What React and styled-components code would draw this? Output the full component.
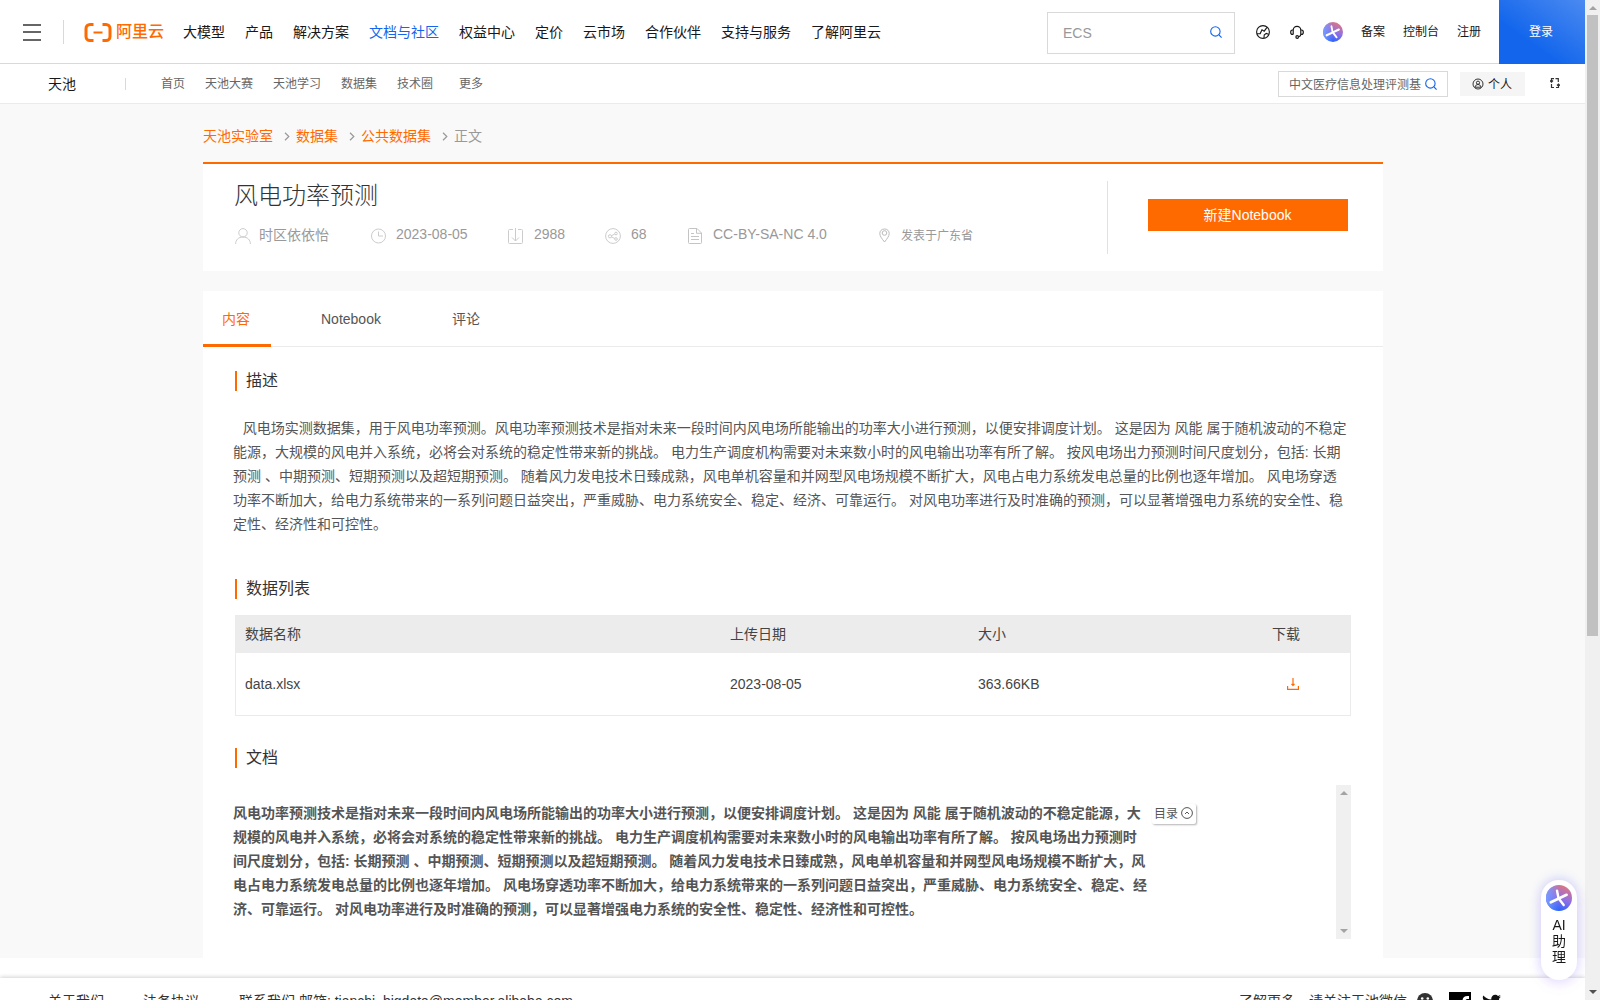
import React from 'react';
import styled, { createGlobalStyle } from 'styled-components';
import { FaTwitter } from 'react-icons/fa';

const GlobalStyle = createGlobalStyle`
  * {
    box-sizing: border-box;
  }

  body {
    margin: 0;
    background: #fff;
    font-family: 'Liberation Sans', 'Noto Sans CJK SC', sans-serif;
    font-size: 14px;
    color: #181818;
    overflow: hidden;
  }

  svg {
    display: block;
    flex: none;
  }
`;

const Screen = styled.div`
  display: flex;
  width: 1600px;
  height: 1000px;
  overflow: hidden;
`;

const Page = styled.div`
  width: 1585px;
  height: 1000px;
  overflow: hidden;
`;

const TopBar = styled.header`
  display: flex;
  align-items: center;
  height: 64px;
  padding-left: 23px;
  border-bottom: 1px solid #d9d9d9;
`;

const Menu = styled.div`
  display: flex;
  flex-direction: column;
  justify-content: space-between;
  width: 18px;
  height: 17px;
  margin-top: 1px;

  span {
    height: 2px;
    background: #666;
  }
`;

const Divider = styled.div`
  flex: none;
  width: 1px;
  height: ${({ $height }) => $height}px;
  margin: ${({ $margin }) => $margin || '0'};
  background: ${({ $color }) => $color || '#d9d9d9'};
`;

const Logo = styled.div`
  display: flex;
  align-items: center;
  gap: 4px;
  width: 80px;
  margin-top: 1px;
  color: #ff6a00;
  font-size: 16px;
  font-weight: 500;
  line-height: 20px;
  white-space: nowrap;
`;

const Nav = styled.nav`
  display: flex;
  gap: 20px;
  margin-left: 19px;
`;

const NavLink = styled.a`
  color: ${({ $active }) => ($active ? '#1366ec' : '#181818')};
  line-height: 20px;
  white-space: nowrap;
`;

const Search = styled.div`
  display: flex;
  align-items: center;
  justify-content: space-between;
  width: 188px;
  height: 42px;
  margin: 2px 0 0 auto;
  padding: 0 12px 0 15px;
  border: 1px solid #d9d9d9;
  color: #999;

  svg {
    margin-bottom: 2px;
  }
`;

const Tools = styled.div`
  display: flex;
  align-items: center;
  width: 264px;
  padding-left: 21px;
  font-size: 12px;
  white-space: nowrap;
`;

const ToolLink = styled.a`
  margin-left: ${({ $gap }) => $gap}px;
  line-height: 18px;
`;

const Login = styled.a`
  display: flex;
  align-items: center;
  justify-content: center;
  width: 86px;
  height: 64px;
  margin-bottom: -1px;
  padding: 0 2px 3px 0;
  background: linear-gradient(35deg, #1366ec 35%, #4b8af1 100%);
  color: #fff;
  font-size: 12px;
`;

const SubBar = styled.div`
  display: flex;
  align-items: center;
  height: 40px;
  padding: 0 25px 2px 48px;
  border-bottom: 1px solid #ebebeb;
  background: #fff;
`;

const SubNav = styled.nav`
  display: flex;
  margin-left: 35px;
  color: #666;
  font-size: 12px;

  a {
    margin-right: 20px;
  }

  a:last-child {
    margin: 0 0 0 6px;
  }
`;

const SubSearch = styled.div`
  display: flex;
  align-items: center;
  justify-content: space-between;
  width: 170px;
  height: 26px;
  margin: 2px 12px 0 auto;
  padding: 0 10px;
  border: 1px solid #d9d9d9;
  color: #666;
  font-size: 12px;
  white-space: nowrap;
`;

const Account = styled.div`
  display: flex;
  align-items: center;
  gap: 4px;
  width: 65px;
  height: 24px;
  margin: 2px 25px 0 0;
  padding-left: 12px;
  background: #f5f5f5;
  font-size: 12px;
`;

const Main = styled.main`
  height: 854px;
  padding-left: 203px;
  background: #f9f9f9;
`;

const Crumbs = styled.div`
  display: flex;
  align-items: center;
  height: 58px;
  padding-top: 4px;
  color: #999;

  a {
    color: #ff6a00;
  }

  svg {
    margin: 3px 6px 0 11px;
  }
`;

const SummaryCard = styled.section`
  display: flex;
  width: 1180px;
  height: 109px;
  border-top: 2px solid #ff6a00;
  background: #fff;
`;

const Summary = styled.div`
  width: 904px;
  padding: 14px 0 0 31px;
`;

const Title = styled.h1`
  margin: 0;
  color: #333;
  font-size: 24px;
  font-weight: 300;
  line-height: 36px;
`;

const MetaRow = styled.div`
  display: flex;
  align-items: center;
  height: 20px;
  margin: 10px 0 0 1px;
  color: #999;
`;

const Meta = styled.div`
  display: flex;
  align-items: center;
  gap: ${({ $gap }) => $gap || 10}px;
  width: ${({ $width }) => $width}px;
  font-size: ${({ $small }) => ($small ? 12 : 14)}px;
  white-space: nowrap;

  svg {
    margin-top: 3px;
  }
`;

const CreateButton = styled.button`
  width: 200px;
  height: 32px;
  margin: 35px 0 0 40px;
  padding: 0 1px 2px 0;
  border: 0;
  background: #ff6a00;
  color: #fff;
  font: inherit;
`;

const ContentCard = styled.section`
  width: 1180px;
  height: 667px;
  margin-top: 20px;
  background: #fff;
`;

const Tabs = styled.div`
  display: flex;
  height: 56px;
  border-bottom: 1px solid #ebebeb;
`;

const Tab = styled.a`
  height: 56px;
  margin-right: 31px;
  padding: 0 21px 0 19px;
  border-bottom: 3px solid ${({ $active }) => ($active ? '#ff6a00' : 'transparent')};
  color: ${({ $active }) => ($active ? '#ff6a00' : '#555')};
  line-height: 56px;
`;

const SectionTitle = styled.h2`
  height: 20px;
  margin: ${({ $top }) => $top}px 0 0 32px;
  padding-left: 9px;
  border-left: 2px solid #ff6a00;
  color: #333;
  font-size: 16px;
  font-weight: 400;
  line-height: 19px;
`;

const Description = styled.p`
  margin: 25px 0 0 30px;
  color: #555;
  line-height: 24px;
  text-indent: 2px;
  white-space: pre;
`;

const Table = styled.div`
  width: 1116px;
  height: 101px;
  margin: 16px 0 0 32px;
  border: 1px solid #ebebeb;
`;

const TableRow = styled.div`
  display: grid;
  grid-template-columns: 485px 248px 294px 1fr;
  align-items: center;
  height: ${({ $head }) => ($head ? 37 : 62)}px;
  padding: ${({ $head }) => ($head ? '0 0 3px 9px' : '0 0 0 9px')};
  background: ${({ $head }) => ($head ? '#ececec' : '#fff')};
  color: #444;
`;

const DownloadCell = styled.div`
  padding-left: 15px;
`;

const DocPane = styled.div`
  display: flex;
  align-items: flex-start;
  width: 1118px;
  height: 154px;
  margin: 17px 0 0 30px;
`;

const DocText = styled.p`
  width: 919px;
  margin: 16px 0 0;
  color: #555;
  font-weight: 700;
  line-height: 24px;
  white-space: pre;
`;

const Toc = styled.div`
  display: flex;
  align-items: center;
  gap: 3px;
  width: 44px;
  height: 20px;
  margin-top: 19px;
  padding: 0 0 3px 2px;
  border-radius: 2px;
  box-shadow: 1px 1px 2px rgba(0, 0, 0, 0.3);
  color: #555;
  font-size: 12px;
  white-space: nowrap;
`;

const Track = styled.div`
  display: flex;
  flex: none;
  flex-direction: column;
  align-items: center;
  justify-content: space-between;
  width: 15px;
  height: ${({ $height }) => $height}px;
  margin-left: auto;
  padding: 6px 0;
  background: #f0f0f0;
`;

const Thumb = styled.div`
  width: 11px;
  height: 621px;
  margin: 5px 0 auto;
  background: #c1c1c1;
`;

const Arrow = styled.div`
  width: 0;
  height: 0;
  border: 4px solid transparent;
  border-top-width: ${({ $down }) => ($down ? 4 : 0)}px;
  border-bottom-width: ${({ $down }) => ($down ? 0 : 4)}px;
  border-${({ $down }) => ($down ? 'top' : 'bottom')}-color: ${({ $color }) => $color || '#a3a3a3'};
`;

const Footer = styled.footer`
  display: flex;
  align-items: flex-start;
  height: 60px;
  margin-top: 20px;
  padding: 13px 84px 0 48px;
  box-shadow: 0 -1px 4px rgba(0, 0, 0, 0.18);
  color: #333;
  line-height: 20px;
  white-space: nowrap;

  a {
    margin-right: 39px;
  }
`;

const Email = styled.span`
  margin-left: 1px;
`;

const Social = styled.div`
  display: flex;
  align-items: flex-start;
  margin-left: auto;

  svg {
    margin: 2px 0 0 10px;
  }

  svg:nth-of-type(2) {
    margin: 1px 11px 0 16px;
  }

  svg:last-child {
    margin: 2px 0 0;
  }
`;

const Assistant = styled.aside`
  position: fixed;
  top: 880px;
  left: 1541px;
  display: flex;
  flex-direction: column;
  align-items: center;
  width: 36px;
  height: 100px;
  padding-top: 5px;
  border-radius: 18px;
  background: #fff;
  box-shadow: 0 -2px 12px rgba(70, 90, 255, 0.2), 0 4px 14px rgba(160, 90, 240, 0.14);
  line-height: 16px;

  span:first-of-type {
    margin-top: 6px;
  }
`;

const Icon = ({ size = 16, width, height, box = 16, color = 'currentColor', weight = 1, children }) => (
  <svg
    width={width || size}
    height={height || size}
    viewBox={`0 0 ${width && height ? `${width} ${height}` : `${box} ${box}`}`}
    fill="none"
    stroke={color}
    strokeWidth={weight}
  >
    {children}
  </svg>
);

const SearchIcon = () => (
  <Icon size={12} box={12} color="#1366ec" weight={1.1}>
    <circle cx="5.4" cy="5.4" r="4.7" />
    <path d="M9 9l2.6 2.6" />
  </Icon>
);

const Chevron = () => (
  <Icon width={6} height={9} color="#999" weight={1.2}>
    <path d="M1 .8l3.8 3.7L1 8.2" />
  </Icon>
);

const AiIcon = ({ size, id }) => (
  <svg width={size} height={size} viewBox="0 0 26 26">
    <defs>
      <linearGradient id={id} x1="0.8" y1="0.05" x2="0.4" y2="1">
        <stop offset="0" stopColor="#df7680" />
        <stop offset="0.5" stopColor="#8f6fe6" />
        <stop offset="1" stopColor="#1f63ff" />
      </linearGradient>
      <linearGradient id={`${id}-side`} x1="0" y1="0.5" x2="0.5" y2="0.5">
        <stop offset="0" stopColor="#7a9cff" />
        <stop offset="1" stopColor="#7a9cff" stopOpacity="0" />
      </linearGradient>
    </defs>
    <circle cx="13" cy="13" r="13" fill={`url(#${id})`} />
    <circle cx="13" cy="13" r="13" fill={`url(#${id}-side)`} />
    <g fill="none" stroke="#fff" strokeLinecap="round">
      <path d="M11 5.600l1.500 7.600 5.200 6.800" strokeWidth="2.400" />
      <path d="M4.800 17.300l8-3.800 7.800-3.700" strokeWidth="2.700" />
    </g>
  </svg>
);

const navItems = ['大模型', '产品', '解决方案', '文档与社区', '权益中心', '定价', '云市场', '合作伙伴', '支持与服务', '了解阿里云'];
const subNavItems = ['首页', '天池大赛', '天池学习', '数据集', '技术圈', '更多'];

const description = `\u00a0\u00a0风电场实测数据集，用于风电功率预测。风电功率预测技术是指对未来一段时间内风电场所能输出的功率大小进行预测，以便安排调度计划。 这是因为 风能 属于随机波动的不稳定
能源，大规模的风电并入系统，必将会对系统的稳定性带来新的挑战。 电力生产调度机构需要对未来数小时的风电输出功率有所了解。 按风电场出力预测时间尺度划分，包括: 长期
预测 、中期预测、短期预测以及超短期预测。 随着风力发电技术日臻成熟，风电单机容量和并网型风电场规模不断扩大，风电占电力系统发电总量的比例也逐年增加。 风电场穿透
功率不断加大，给电力系统带来的一系列问题日益突出，严重威胁、电力系统安全、稳定、经济、可靠运行。 对风电功率进行及时准确的预测，可以显著增强电力系统的安全性、稳
定性、经济性和可控性。`;

const documentText = `风电功率预测技术是指对未来一段时间内风电场所能输出的功率大小进行预测，以便安排调度计划。 这是因为 风能 属于随机波动的不稳定能源，大
规模的风电并入系统，必将会对系统的稳定性带来新的挑战。 电力生产调度机构需要对未来数小时的风电输出功率有所了解。 按风电场出力预测时
间尺度划分，包括: 长期预测 、中期预测、短期预测以及超短期预测。 随着风力发电技术日臻成熟，风电单机容量和并网型风电场规模不断扩大，风
电占电力系统发电总量的比例也逐年增加。 风电场穿透功率不断加大，给电力系统带来的一系列问题日益突出，严重威胁、电力系统安全、稳定、经
济、可靠运行。 对风电功率进行及时准确的预测，可以显著增强电力系统的安全性、稳定性、经济性和可控性。`;

function App() {
  return (
    <Screen>
      <GlobalStyle />
      <Page>
        <TopBar>
          <Menu>
            <span />
            <span />
            <span />
          </Menu>
          <Divider $height={24} $margin="0 20px 0 22px" />
          <Logo>
            <Icon width={28} height={19} color="#ff6a00" weight={3}>
              <path d="M9.500 1.500H6a4 4 0 0 0-4 4v8a4 4 0 0 0 4 4h3.500M18.500 1.500H22a4 4 0 0 1 4 4v8a4 4 0 0 1-4 4h-3.500" />
              <path d="M9.500 9.500h9" strokeWidth="2" />
            </Icon>
            阿里云
          </Logo>
          <Nav>
            {navItems.map((item) => (
              <NavLink key={item} $active={item === '文档与社区'}>{item}</NavLink>
            ))}
          </Nav>
          <Search>
            ECS
            <SearchIcon />
          </Search>
          <Tools>
            <Icon size={14} box={14} weight={1.1}>
              <circle cx="7" cy="7" r="6.400" />
              <path d="M.8 8.800L4.200 8.600 6 4.800l2.200 1.400L11 2.400M8 13l.2-3 2-1.600 2.400.8" />
            </Icon>
            <ToolLink $gap={20}>
              <Icon size={14} box={14} weight={1.200}>
                <path d="M3.200 9.400V5.200a3.800 3.800 0 0 1 7.600 0v4.200c0 1.200-.8 2-2 2.400M3.200 5H2.400Q.7 5 .7 7.200t1.700 2.200h.8M10.800 5h.8q1.700 0 1.700 2.200t-1.700 2.200h-.8" />
                <circle cx="7.200" cy="12" r="1.300" />
              </Icon>
            </ToolLink>
            <ToolLink $gap={19}><AiIcon size={20} id="ai-top" /></ToolLink>
            <ToolLink $gap={18}>备案</ToolLink>
            <ToolLink $gap={18}>控制台</ToolLink>
            <ToolLink $gap={18}>注册</ToolLink>
          </Tools>
          <Login>登录</Login>
        </TopBar>

        <SubBar>
          天池
          <Divider $height={12} $margin="2px 0 0 49px" />
          <SubNav>
            {subNavItems.map((item) => (
              <a key={item}>{item}</a>
            ))}
          </SubNav>
          <SubSearch>
            中文医疗信息处理评测基
            <SearchIcon />
          </SubSearch>
          <Account>
            <Icon size={12} box={12} color="#333">
              <circle cx="6" cy="6" r="5" />
              <circle cx="6" cy="4.700" r="1.600" />
              <path d="M3 9.200c.4-3.600 5.600-3.600 6 0z" />
            </Icon>
            个人
          </Account>
          <Icon width={10} height={12} color="#333" weight={1.200}>
            <path d="M4 1.600H1.500V5M0 3.500L1.500 5.200 3 3.500M1.500 7v3.500H4M5.500 1.600h2.800V5M6 10.500h2.500V7M7 8.500L8.500 7 10 8.500" />
          </Icon>
        </SubBar>

        <Main>
          <Crumbs>
            <a>天池实验室</a>
            <Chevron />
            <a>数据集</a>
            <Chevron />
            <a>公共数据集</a>
            <Chevron />
            正文
          </Crumbs>
          <SummaryCard>
            <Summary>
              <Title>风电功率预测</Title>
              <MetaRow>
                <Meta $width={136} $gap={8}>
                  <Icon color="#ccc">
                    <circle cx="8" cy="4.800" r="4.200" />
                    <path d="M.6 16c0-4.200 3-7 7.400-7s7.400 2.800 7.400 7" />
                  </Icon>
                  时区依依怡
                </Meta>
                <Meta $width={137} $gap={9}>
                  <Icon color="#ccc">
                    <circle cx="7.500" cy="8" r="7" />
                    <path d="M7.500 3.500V8H12" />
                  </Icon>
                  2023-08-05
                </Meta>
                <Meta $width={97}>
                  <Icon color="#ccc">
                    <path d="M5 1.500H1.500q-1 0-1 1v12q0 1 1 1h12q1 0 1-1v-12q0-1-1-1H10M7.500 0v13M4 9.500L7.500 13 11 9.500" />
                  </Icon>
                  2988
                </Meta>
                <Meta $width={82}>
                  <Icon color="#ccc">
                    <circle cx="8" cy="8" r="7.400" />
                    <circle cx="5" cy="8.300" r="1.600" />
                    <circle cx="11" cy="5.500" r="1.300" />
                    <circle cx="11" cy="11" r="1.300" />
                    <path d="M6.500 7.700l3.200-1.600M6.500 9l3.200 1.400" />
                  </Icon>
                  68
                </Meta>
                <Meta $width={191}>
                  <Icon color="#c4c4c4">
                    <path d="M2.500.5h7.500l4.500 4.500v9.500q0 1-1 1h-11q-1 0-1-1v-13q0-1 1-1zM9.500.5v4.800h5M4 5.500h3M4 8.500h8M4 11.500h8" />
                  </Icon>
                  CC-BY-SA-NC 4.0
                </Meta>
                <Meta $small $gap={11}>
                  <Icon width={12} height={16} color="#bbb">
                    <path d="M6.500 1c-3 0-4.700 2-4.700 4.500s2 5.200 4.700 8.500c2.700-3.300 4.700-6 4.700-8.500S9.500 1 6.500 1z" />
                    <circle cx="6.500" cy="5" r="2.300" />
                  </Icon>
                  发表于广东省
                </Meta>
              </MetaRow>
            </Summary>
            <Divider $height={73} $margin="17px 0 0" $color="#e1e1e1" />
            <CreateButton>新建Notebook</CreateButton>
          </SummaryCard>

          <ContentCard>
            <Tabs>
              <Tab $active>内容</Tab>
              <Tab>Notebook</Tab>
              <Tab>评论</Tab>
            </Tabs>
            <SectionTitle $top={24}>描述</SectionTitle>
            <Description>{description}</Description>
            <SectionTitle $top={43}>数据列表</SectionTitle>
            <Table>
              <TableRow $head>
                <div>数据名称</div>
                <div>上传日期</div>
                <div>大小</div>
                <div>下载</div>
              </TableRow>
              <TableRow>
                <div>data.xlsx</div>
                <div>2023-08-05</div>
                <div>363.66KB</div>
                <DownloadCell>
                  <Icon size={12} box={12} color="#ff6a00" weight={1.200}>
                    <path d="M.6 8v3.400h10.800V8M6 0v7.500M4.500 6L6 7.500 7.500 6" />
                  </Icon>
                </DownloadCell>
              </TableRow>
            </Table>
            <SectionTitle $top={32}>文档</SectionTitle>
            <DocPane>
              <DocText>{documentText}</DocText>
              <Toc>
                目录
                <Icon size={12} box={12}>
                  <circle cx="6" cy="6" r="5.400" />
                  <path d="M4 7l2-2 2 2" />
                </Icon>
              </Toc>
              <Track $height={154}>
                <Arrow />
                <Arrow $down />
              </Track>
            </DocPane>
          </ContentCard>
        </Main>

        <Footer>
          <a>关于我们</a>
          <a>法务协议</a>
          <Email>联系我们 邮箱: tianchi_bigdata@member.alibaba.com</Email>
          <Social>
            了解更多，请关注天池微信
            <svg width="16" height="16" viewBox="0 0 16 16">
              <circle cx="8" cy="8" r="8" fill="#333" />
              <circle cx="5.200" cy="5.500" r="1.300" fill="#fff" />
              <circle cx="10.800" cy="5.500" r="1.300" fill="#fff" />
            </svg>
            <svg width="22" height="22" viewBox="0 0 22 22">
              <path d="M0 0h22v22H0z" />
              <path d="M13.500 22v-7h-2v-3h2V9q0-5 5-5H20v3h-1.500q-2 0-2 2v3H20v3h-3.500v7z" fill="#fff" />
            </svg>
            <FaTwitter size={19} color="#111" />
          </Social>
        </Footer>
      </Page>
      <Track $height={1000}>
        <Arrow />
        <Thumb />
        <Arrow $down $color="#505050" />
      </Track>
      <Assistant>
        <AiIcon size={26} id="ai-side" />
        <span>AI</span>
        <span>助</span>
        <span>理</span>
      </Assistant>
    </Screen>
  );
}

export default App;
